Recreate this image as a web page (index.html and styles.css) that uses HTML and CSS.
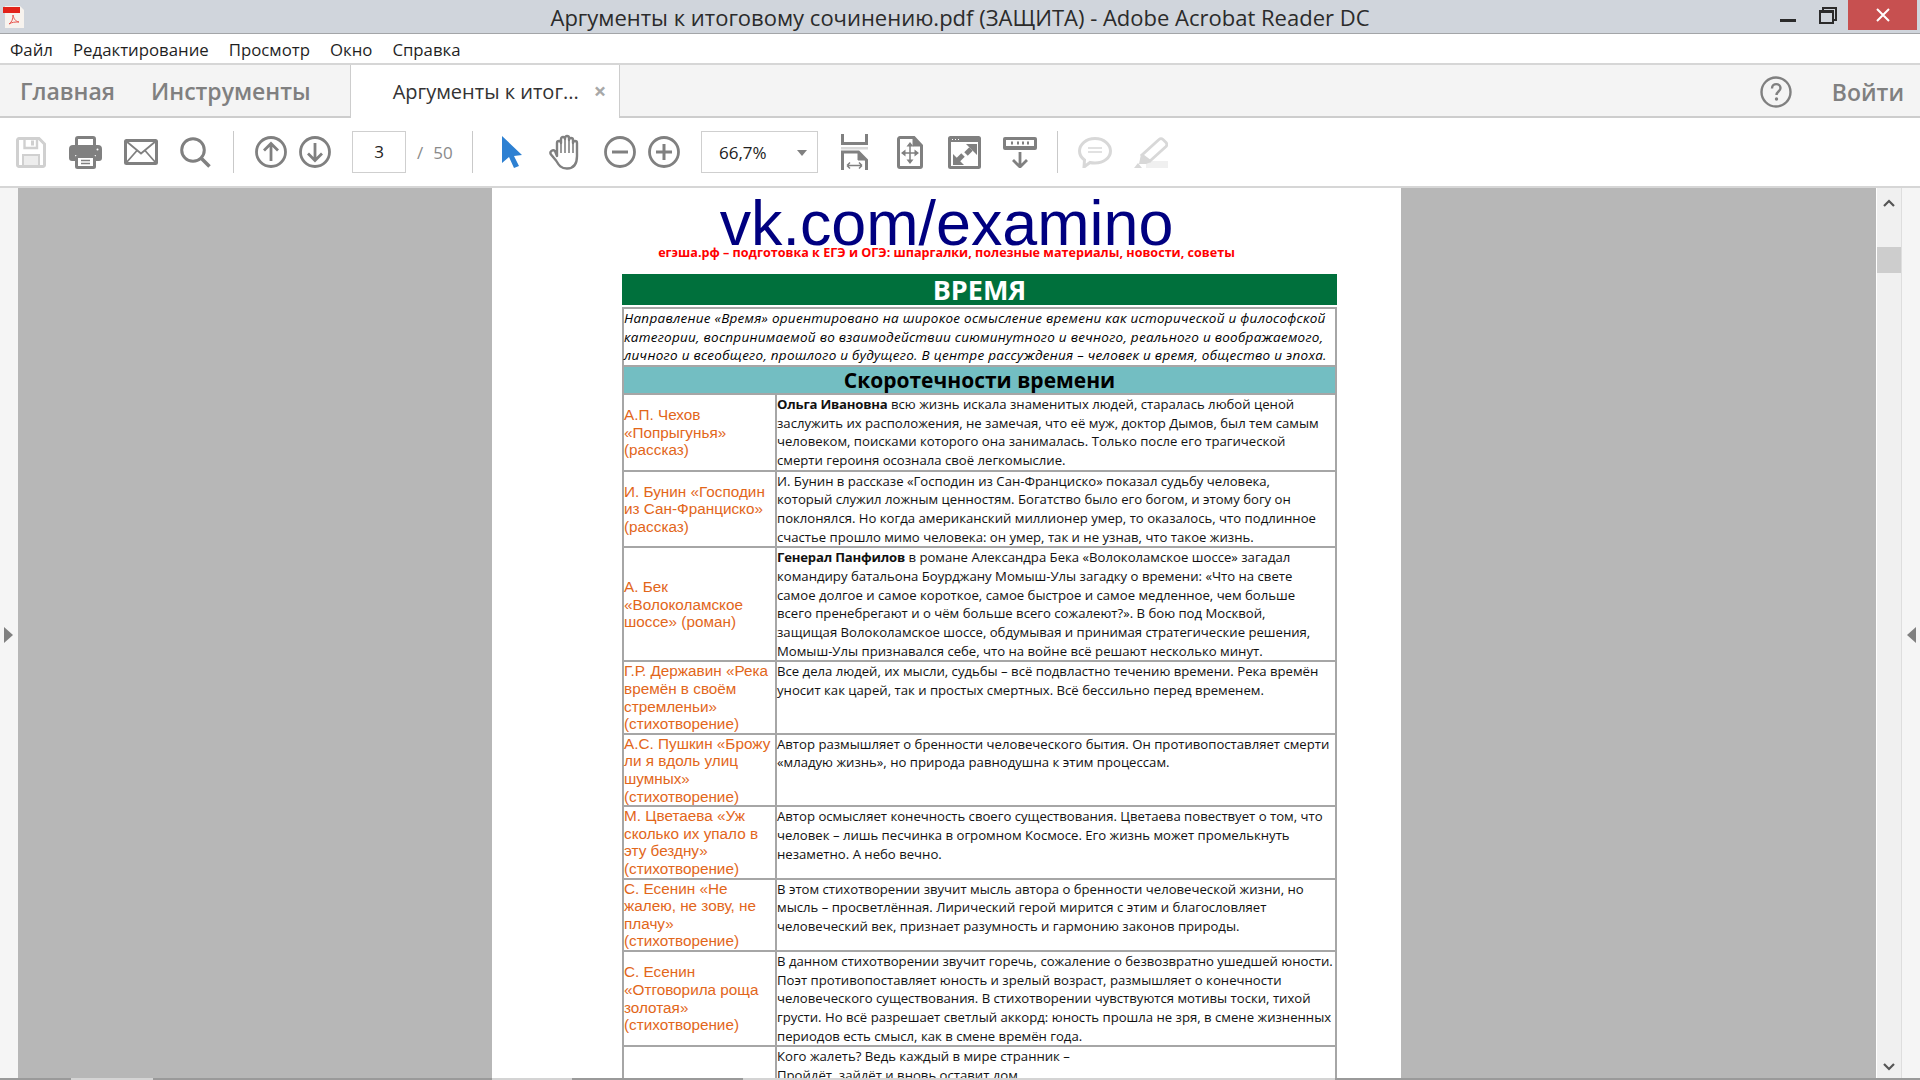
FILE: index.html
```html
<!DOCTYPE html>
<html lang="ru">

<head>
    <title>Аргументы к итоговому сочинению.pdf (ЗАЩИТА) - Adobe Acrobat Reader DC</title>
    <link rel="stylesheet" href="styles.css">
</head>

<body>
    <div class="app">
        <!-- title bar -->
        <div class="titlebar">
            <svg class="pdf-icon" viewBox="0 0 22 22">
                <path d="M2 0h15l4 4v18H2z" fill="#f7f3ee" />
                <rect x="0" y="1" width="17" height="6" fill="#e2231a" />
                <path d="M6 18c3-2 4-5 4-9 1 4 2 6 6 7-4 0-7 0-10 2z" fill="none" stroke="#e8564f" stroke-width="1" />
            </svg>
            <div class="title-text">Аргументы к итоговому сочинению.pdf (ЗАЩИТА) - Adobe Acrobat Reader DC</div>
            <div class="win-buttons">
                <div class="win-min"></div>
                <svg class="win-restore" width="18" height="17" viewBox="0 0 18 17">
                    <path d="M4 3V1h13v12h-3" fill="none" stroke="#2b2b2b" stroke-width="2" />
                    <rect x="1" y="4" width="13" height="12" fill="none" stroke="#2b2b2b" stroke-width="2" />
                    <path d="M1 5h13" stroke="#2b2b2b" stroke-width="2" />
                </svg>
                <div class="win-close">
                    <svg width="14" height="14" viewBox="0 0 14 14">
                        <path d="M1 1l12 12M13 1L1 13" stroke="#fff" stroke-width="2" />
                    </svg>
                </div>
            </div>
        </div>

        <!-- menu -->
        <div class="menubar">
            <span>Файл</span>
            <span>Редактирование</span>
            <span>Просмотр</span>
            <span>Окно</span>
            <span>Справка</span>
        </div>

        <!-- tabs -->
        <div class="tabbar">
            <div class="tab-link tab-home">Главная</div>
            <div class="tab-link tab-tools">Инструменты</div>
            <div class="doc-tab">
                <span class="doc-tab-name">Аргументы к итог...</span>
                <span class="doc-tab-close">×</span>
            </div>
            <div class="tab-right">
                <svg class="help-icon" width="32" height="32" viewBox="0 0 32 32">
                    <circle cx="16" cy="16" r="14.5" fill="none" stroke="#808080" stroke-width="2.4" />
                    <path d="M12 12.5c0-6 8.500-5.500 8.500-.5 0 3.500-4 3.500-4 7" fill="none" stroke="#808080" stroke-width="2.400" />
                    <circle cx="16.500" cy="23" r="1.700" fill="#808080" />
                </svg>
                <div class="login">Войти</div>
            </div>
        </div>

        <!-- toolbar -->
        <div class="toolbar">
            <div class="tool tool-file">
                <svg width="30" height="31" viewBox="0 0 30 31">
                    <path d="M3 1.500h20l5.500 5.500v21a1.500 1.500 0 0 1-1.500 1.500H3A1.500 1.500 0 0 1 1.500 28V3A1.500 1.500 0 0 1 3 1.500z" fill="none" stroke="#d0d0d0" stroke-width="3" />
                    <path d="M8.500 2v9h12.500V2" fill="none" stroke="#d0d0d0" stroke-width="2.400" />
                    <rect x="15" y="3.500" width="3" height="5" fill="#d0d0d0" />
                    <rect x="7" y="18" width="16" height="11" fill="#ededed" stroke="#d0d0d0" stroke-width="2" />
                </svg>
            </div>
            <div class="tool tool-file">
                <svg width="33" height="33" viewBox="0 0 33 33">
                    <path d="M7.500 11V3a1.500 1.500 0 0 1 1.500-1.500h15A1.500 1.500 0 0 1 25.500 3v8" fill="none" stroke="#808080" stroke-width="3" />
                    <path d="M4 9h25a4 4 0 0 1 4 4v9a3 3 0 0 1-3 3h-3v-6H6v6H3a3 3 0 0 1-3-3v-9a4 4 0 0 1 4-4z" fill="#808080" />
                    <rect x="7.500" y="20.500" width="18" height="11" rx="1" fill="#fff" stroke="#808080" stroke-width="3" />
                    <path d="M12 24.500h9M12 27.500h9" stroke="#808080" stroke-width="1.500" />
                    <circle cx="28.500" cy="13.500" r="1" fill="#fff" />
                </svg>
            </div>
            <div class="tool tool-file">
                <svg width="34" height="26" viewBox="0 0 34 26">
                    <rect x="1.500" y="1.500" width="31" height="23" rx="1" fill="none" stroke="#808080" stroke-width="3" />
                    <path d="M2 2l15 12.500L32 2M2 24l11-12.500M32 24L21 11.500" fill="none" stroke="#808080" stroke-width="1.800" />
                </svg>
            </div>
            <div class="tool tool-file">
                <svg width="31" height="31" viewBox="0 0 31 31">
                    <circle cx="13" cy="13" r="11.300" fill="none" stroke="#808080" stroke-width="3" />
                    <path d="M21 21l8.500 8.500" stroke="#808080" stroke-width="3.500" />
                </svg>
            </div>
            <div class="sep sep-file"></div>
            <div class="tool tool-nav tool-nav-first">
                <svg width="32" height="32" viewBox="0 0 32 32">
                    <circle cx="16" cy="16" r="14.500" fill="none" stroke="#808080" stroke-width="2.800" />
                    <path d="M16 25V8M9 14.500L16 7.500l7 7" fill="none" stroke="#808080" stroke-width="2.800" />
                </svg>
            </div>
            <div class="tool tool-nav">
                <svg width="32" height="32" viewBox="0 0 32 32">
                    <circle cx="16" cy="16" r="14.500" fill="none" stroke="#808080" stroke-width="2.800" />
                    <path d="M16 7v17M9 17.500l7 7 7-7" fill="none" stroke="#808080" stroke-width="2.800" />
                </svg>
            </div>
            <div class="page-box">3</div>
            <div class="page-total"><span class="page-slash">/</span>50</div>
            <div class="sep"></div>
            <div class="tool tool-pick">
                <svg width="21" height="32" viewBox="0 0 21 32">
                    <path d="M1 0l20 19-8 1 5 10-5 2-5-11-7 6z" fill="#2d80d2" />
                </svg>
            </div>
            <div class="tool tool-hand">
                <svg width="34" height="36" viewBox="0 0 34 36">
                    <path d="M9 22V9a2 2 0 0 1 4 0V5a2 2 0 0 1 4 0V4a2 2 0 0 1 4 0v2a2 2 0 0 1 4 0v3a2 2 0 0 1 4 0v13c0 8-3 12.500-10 12.500-6 0-8-3-11-8l-5-6c-2-3 2-5.500 4-3.500z" fill="none" stroke="#808080" stroke-width="2.400" stroke-linejoin="round" />
                    <path d="M13 8v11M17 5v14M21 5v14M25 8v11" stroke="#808080" stroke-width="1.600" />
                </svg>
            </div>
            <div class="tool tool-zoom">
                <svg width="32" height="32" viewBox="0 0 32 32">
                    <circle cx="16" cy="16" r="14.500" fill="none" stroke="#808080" stroke-width="2.800" />
                    <path d="M8 16h16" stroke="#808080" stroke-width="3" />
                </svg>
            </div>
            <div class="tool tool-zoom">
                <svg width="32" height="32" viewBox="0 0 32 32">
                    <circle cx="16" cy="16" r="14.500" fill="none" stroke="#808080" stroke-width="2.800" />
                    <path d="M8 16h16M16 8v16" stroke="#808080" stroke-width="3" />
                </svg>
            </div>
            <div class="zoom-box">
                <span>66,7%</span>
                <i class="zoom-arrow"></i>
            </div>
            <div class="tool tool-fit tool-fit-first">
                <svg width="27" height="36" viewBox="0 0 27 36">
                    <path d="M1.500 0v9.500h24V0" fill="none" stroke="#808080" stroke-width="3" />
                    <rect x="0" y="13" width="27" height="2.500" fill="#d8d8d8" />
                    <path d="M1.500 36V18h16l8 8v10" fill="none" stroke="#808080" stroke-width="3" />
                    <path d="M17 18v8h8" fill="#808080" stroke="#808080" />
                    <path d="M6 31.500h15M6 31.500l3-3M6 31.500l3 3M21 31.500l-3-3M21 31.500l-3 3" fill="none" stroke="#808080" stroke-width="1.500" />
                </svg>
            </div>
            <div class="tool tool-fit">
                <svg width="26" height="33" viewBox="0 0 26 33">
                    <path d="M3 1.500h14l7.500 8V30a1.500 1.500 0 0 1-1.500 1.500H3A1.500 1.500 0 0 1 1.500 30V3A1.500 1.500 0 0 1 3 1.500z" fill="none" stroke="#808080" stroke-width="3" />
                    <path d="M16 2v8h8" fill="#808080" stroke="#808080" />
                    <path d="M13 10v14M7 17h12" stroke="#808080" stroke-width="1.500" />
                    <path d="M13 6l3.500 4.500h-7zM13 28l3.500-4.500h-7zM4 17l4.500-3.500v7zM22 17l-4.500-3.500v7z" fill="#808080" />
                </svg>
            </div>
            <div class="tool tool-fit">
                <svg width="33" height="33" viewBox="0 0 33 33">
                    <rect x="1.500" y="1.500" width="30" height="30" rx="1" fill="none" stroke="#808080" stroke-width="3" />
                    <rect x="1" y="1" width="31" height="5" fill="#808080" />
                    <path d="M4 3.500h1M7 3.500h1M10 3.500h1" stroke="#fff" stroke-width="1" />
                    <path d="M18 8h11v11z" fill="#808080" />
                    <path d="M23 13l-5 5" stroke="#808080" stroke-width="5" />
                    <path d="M5 18v11h11z" fill="#808080" />
                    <path d="M10 24l5-5" stroke="#808080" stroke-width="5" />
                </svg>
            </div>
            <div class="tool tool-fit">
                <svg width="34" height="32" viewBox="0 0 34 32">
                    <rect x="0" y="1" width="34" height="13" rx="2" fill="#808080" />
                    <rect x="3" y="4" width="28" height="6" fill="#fff" />
                    <path d="M8 7h2M14 7h2M19 7h2M24 7h2" stroke="#808080" stroke-width="3" />
                    <path d="M17 16v14M10 24l7 7 7-7" fill="none" stroke="#808080" stroke-width="2.800" />
                </svg>
            </div>
            <div class="sep sep-fit"></div>
            <div class="tool tool-mark tool-mark-first">
                <svg width="34" height="31" viewBox="0 0 34 31">
                    <path d="M17 1.500c9 0 15.500 6 15.500 12.500S26 26 17 26c-2 0-3.500 0-5-.5L6 30l.5-7C3 20.500 1.500 17.500 1.500 14 1.500 7.500 8 1.500 17 1.500z" fill="none" stroke="#d8d8d8" stroke-width="3" />
                    <path d="M10 11h14M10 15h14" stroke="#d8d8d8" stroke-width="1.600" />
                </svg>
            </div>
            <div class="tool tool-mark">
                <svg width="34" height="31" viewBox="0 0 34 31">
                    <rect x="12" y="24" width="22" height="7" fill="#f0f0f0" />
                    <path d="M25 2.500a3 3 0 0 1 4 0l3 3a3 3 0 0 1 0 4L16 24l-8-6z" fill="#fff" stroke="#d8d8d8" stroke-width="2.800" />
                    <path d="M7 17l10 8-5 2H5z" fill="#d8d8d8" />
                    <path d="M0 31l4-5 4 5z" fill="#d8d8d8" />
                </svg>
            </div>
        </div>

        <!-- document -->
        <div class="workspace">
            <div class="side-panel">
                <i class="arrow-right"></i>
            </div>
            <div class="canvas">
                <div class="page">
                    <div class="logo">vk.com/examino</div>
                    <div class="slogan">егэша.рф – подготовка к ЕГЭ и ОГЭ: шпаргалки, полезные материалы, новости, советы</div>
                    <div class="topic">ВРЕМЯ</div>
                    <table class="args">
                        <colgroup>
                            <col class="col-work">
                            <col>
                        </colgroup>
                        <tr>
                            <td colspan="2" class="intro">Направление «Время» ориентировано на широкое осмысление времени как исторической и философской<br>категории, воспринимаемой во взаимодействии сиюминутного и вечного, реального и воображаемого,<br>личного и всеобщего, прошлого и будущего. В центре рассуждения – человек и время, общество и эпоха.</td>
                        </tr>
                        <tr>
                            <td colspan="2" class="subtopic">Скоротечности времени</td>
                        </tr>
                        <tr>
                            <td class="work">А.П. Чехов<br>«Попрыгунья»<br>(рассказ)</td>
                            <td class="text"><b>Ольга Ивановна</b> всю жизнь искала знаменитых людей, старалась любой ценой<br>заслужить их расположения, не замечая, что её муж, доктор Дымов, был тем самым<br>человеком, поисками которого она занималась. Только после его трагической<br>смерти героиня осознала своё легкомыслие.</td>
                        </tr>
                        <tr>
                            <td class="work">И. Бунин «Господин<br>из Сан-Франциско»<br>(рассказ)</td>
                            <td class="text">И. Бунин в рассказе «Господин из Сан-Франциско» показал судьбу человека,<br>который служил ложным ценностям. Богатство было его богом, и этому богу он<br>поклонялся. Но когда американский миллионер умер, то оказалось, что подлинное<br>счастье прошло мимо человека: он умер, так и не узнав, что такое жизнь.</td>
                        </tr>
                        <tr>
                            <td class="work">А. Бек<br>«Волоколамское<br>шоссе» (роман)</td>
                            <td class="text"><b>Генерал Панфилов</b> в романе Александра Бека «Волоколамское шоссе» загадал<br>командиру батальона Боурджану Момыш-Улы загадку о времени: «Что на свете<br>самое долгое и самое короткое, самое быстрое и самое медленное, чем больше<br>всего пренебрегают и о чём больше всего сожалеют?». В бою под Москвой,<br>защищая Волоколамское шоссе, обдумывая и принимая стратегические решения,<br>Момыш-Улы признавался себе, что на войне всё решают несколько минут.</td>
                        </tr>
                        <tr>
                            <td class="work">Г.Р. Державин «Река<br>времён в своём<br>стремленьи»<br>(стихотворение)</td>
                            <td class="text">Все дела людей, их мысли, судьбы – всё подвластно течению времени. Река времён<br>уносит как царей, так и простых смертных. Всё бессильно перед временем.</td>
                        </tr>
                        <tr>
                            <td class="work">А.С. Пушкин «Брожу<br>ли я вдоль улиц<br>шумных»<br>(стихотворение)</td>
                            <td class="text">Автор размышляет о бренности человеческого бытия. Он противопоставляет смерти<br>«младую жизнь», но природа равнодушна к этим процессам.</td>
                        </tr>
                        <tr>
                            <td class="work">М. Цветаева «Уж<br>сколько их упало в<br>эту бездну»<br>(стихотворение)</td>
                            <td class="text">Автор осмысляет конечность своего существования. Цветаева повествует о том, что<br>человек – лишь песчинка в огромном Космосе. Его жизнь может промелькнуть<br>незаметно. А небо вечно.</td>
                        </tr>
                        <tr>
                            <td class="work">С. Есенин «Не<br>жалею, не зову, не<br>плачу»<br>(стихотворение)</td>
                            <td class="text">В этом стихотворении звучит мысль автора о бренности человеческой жизни, но<br>мысль – просветлённая. Лирический герой мирится с этим и благословляет<br>человеческий век, признает разумность и гармонию законов природы.</td>
                        </tr>
                        <tr>
                            <td class="work">С. Есенин<br>«Отговорила роща<br>золотая»<br>(стихотворение)</td>
                            <td class="text">В данном стихотворении звучит горечь, сожаление о безвозвратно ушедшей юности.<br>Поэт противопоставляет юность и зрелый возраст, размышляет о конечности<br>человеческого существования. В стихотворении чувствуются мотивы тоски, тихой<br>грусти. Но всё разрешает светлый аккорд: юность прошла не зря, в смене жизненных<br>периодов есть смысл, как в смене времён года.</td>
                        </tr>
                        <tr>
                            <td class="work"></td>
                            <td class="text">Кого жалеть? Ведь каждый в мире странник –<br>Пройдёт, зайдёт и вновь оставит дом.</td>
                        </tr>
                    </table>
                </div>
            </div>
            <div class="vscroll">
                <svg class="chevron" width="12" height="8" viewBox="0 0 12 8">
                    <path d="M1 7l5-5 5 5" fill="none" stroke="#555" stroke-width="2.200" />
                </svg>
                <div class="thumb"></div>
                <svg class="chevron chevron-down" width="12" height="8" viewBox="0 0 12 8">
                    <path d="M1 1l5 5 5-5" fill="none" stroke="#555" stroke-width="2.200" />
                </svg>
            </div>
            <div class="side-panel">
                <i class="arrow-left"></i>
            </div>
        </div>

        <!-- bottom edge -->
        <div class="bottom-strip">
            <i class="strip-a"></i>
            <i class="strip-b"></i>
            <i class="strip-c"></i>
        </div>
    </div>
</body>

</html>
```

FILE: styles.css
```css
* {
    box-sizing: border-box;
}

html,
body {
    margin: 0;
    height: 100%;
    overflow: hidden;
}

.app {
    height: 1080px;
    display: flex;
    flex-direction: column;
    font-family: "Open Sans", sans-serif;
    background: #fff;
}

/* title bar */
.titlebar {
    height: 34px;
    flex: none;
    position: relative;
    display: flex;
    justify-content: center;
    background: #d0d5dc;
    border-bottom: 1px solid #a3a5a8;
}

.pdf-icon {
    position: absolute;
    left: 3px;
    top: 6px;
    width: 22px;
    height: 22px;
}

.title-text {
    font-size: 22px;
    line-height: 35px;
    color: #2b2b2b;
}

.win-buttons {
    position: absolute;
    right: 3px;
    top: 0;
    display: flex;
    align-items: flex-start;
}

.win-min {
    width: 16px;
    height: 3px;
    margin-top: 19px;
    margin-right: 23px;
    background: #2b2b2b;
}

.win-restore {
    margin-top: 7px;
    margin-right: 11px;
}

.win-close {
    width: 69px;
    height: 30px;
    display: flex;
    align-items: center;
    justify-content: center;
    background: #c75050;
}

/* menu */
.menubar {
    height: 31px;
    flex: none;
    display: flex;
    gap: 20px;
    padding-left: 10px;
    font-size: 16.8px;
    line-height: 32px;
    color: #1f1f1f;
    border-bottom: 2px solid #d6d6d6;
}

/* tabs */
.tabbar {
    height: 53px;
    flex: none;
    display: flex;
    background: #f4f4f4;
    border-bottom: 2px solid #cdcdcd;
}

.tab-link {
    font-size: 23px;
    font-weight: 600;
    line-height: 52px;
    color: #808080;
}

.tab-home {
    margin-left: 20px;
}

.tab-tools {
    margin-left: 36px;
}

.doc-tab {
    width: 270px;
    height: 53px;
    margin-left: 39px;
    padding-left: 42px;
    display: flex;
    background: #fff;
    border-left: 1px solid #cdcdcd;
    border-right: 1px solid #cdcdcd;
}

.doc-tab-name {
    font-size: 20px;
    line-height: 54px;
    color: #333;
}

.doc-tab-close {
    margin-left: 15px;
    font-size: 22px;
    font-weight: 700;
    line-height: 50px;
    color: #a8a8a8;
}

.tab-right {
    margin-left: auto;
    display: flex;
    align-items: center;
    padding: 2px 16px 0 0;
}

.help-icon {
    margin-right: 40px;
}

.login {
    font-size: 23px;
    font-weight: 600;
    color: #808080;
}

/* toolbar */
.toolbar {
    height: 70px;
    flex: none;
    display: flex;
    align-items: center;
    padding-left: 3px;
    border-bottom: 2px solid #d6d6d6;
}

.tool {
    display: flex;
    align-items: center;
    justify-content: center;
}

.tool-file {
    width: 55px;
}

.tool-nav {
    width: 44px;
}

.tool-nav-first {
    margin-left: 15px;
}

.tool-pick {
    width: 40px;
    margin-left: 18px;
}

.tool-hand {
    width: 67px;
}

.tool-zoom {
    width: 44px;
}

.tool-fit {
    width: 55px;
}

.tool-fit-first {
    margin-left: 9px;
}

.tool-mark {
    width: 56px;
}

.tool-mark-first {
    margin-left: 9px;
}

.sep {
    width: 1px;
    height: 42px;
    background: #c9c9c9;
}

.sep-file {
    margin-left: 10px;
}

.sep-fit {
    margin-left: 10px;
}

.page-box {
    width: 54px;
    height: 42px;
    margin-left: 15px;
    font-size: 17px;
    line-height: 40px;
    text-align: center;
    color: #222;
    border: 1px solid #cfcfcf;
}

.page-total {
    width: 66px;
    padding-left: 11px;
    font-size: 17px;
    color: #8a8a8a;
}

.page-slash {
    margin-right: 10px;
}

.zoom-box {
    width: 117px;
    height: 42px;
    margin-left: 15px;
    padding-left: 17px;
    display: flex;
    align-items: center;
    position: relative;
    font-size: 17px;
    color: #222;
    border: 1px solid #cfcfcf;
}

.zoom-arrow {
    position: absolute;
    left: 95px;
    top: 18px;
    border-top: 6px solid #808080;
    border-left: 5px solid transparent;
    border-right: 5px solid transparent;
}

/* document area */
.workspace {
    flex: 1;
    min-height: 0;
    display: flex;
    overflow: hidden;
}

.side-panel {
    width: 18px;
    flex: none;
    background: #f5f5f5;
    position: relative;
}

.arrow-right {
    position: absolute;
    left: 4px;
    top: 439px;
    border-left: 9px solid #808080;
    border-top: 8px solid transparent;
    border-bottom: 8px solid transparent;
}

.arrow-left {
    position: absolute;
    left: 5px;
    top: 439px;
    border-right: 9px solid #808080;
    border-top: 8px solid transparent;
    border-bottom: 8px solid transparent;
}

.canvas {
    flex: 1;
    min-width: 0;
    display: flex;
    justify-content: center;
    padding-right: 1px;
    background: #b7b7b7;
    overflow: hidden;
}

.page {
    width: 909px;
    height: 1000px;
    flex: none;
    padding-top: 12px;
    background: #fff;
}

.logo {
    height: 45px;
    font-family: "Liberation Sans", Arial, sans-serif;
    font-size: 62.8px;
    line-height: 46px;
    text-align: center;
    color: #000080;
}

.slogan {
    font-size: 12.6px;
    font-weight: 700;
    line-height: 16px;
    text-align: center;
    color: #ff0000;
    white-space: nowrap;
}

.topic {
    width: 715px;
    height: 31px;
    margin-top: 13px;
    margin-left: 130px;
    background: #00703c;
    color: #fff;
    font-size: 27px;
    font-weight: 700;
    line-height: 31px;
    text-align: center;
}

.args {
    width: 715px;
    table-layout: fixed;
    margin-top: 2px;
    margin-left: 130px;
    border-collapse: collapse;
    white-space: nowrap;
}

.col-work {
    width: 153px;
}

.args td {
    padding: 0;
    border: 2px solid #a6a6a6;
}

.intro {
    height: 58px;
    font-size: 13.5px;
    font-style: italic;
    letter-spacing: 0.27px;
    line-height: 18.5px;
    color: #000;
}

.subtopic {
    height: 28px;
    background: #73bec2;
    font-size: 21px;
    font-weight: 700;
    line-height: 22px;
    text-align: center;
    color: #000;
}

.args .work {
    font-family: "Liberation Sans", Arial, sans-serif;
    font-size: 15.3px;
    line-height: 17.6px;
    color: #e2661a;
    vertical-align: middle;
}

.args .text {
    font-size: 13.15px;
    line-height: 18.67px;
    color: #111;
    vertical-align: top;
}

.args .text b {
    letter-spacing: -0.2px;
}

/* scrollbar */
.vscroll {
    width: 26px;
    flex: none;
    display: flex;
    flex-direction: column;
    align-items: center;
    padding-top: 11px;
    background: #f0f0f0;
    border-left: 1px solid #fff;
    border-right: 1px solid #dedede;
}

.thumb {
    width: 24px;
    height: 26px;
    margin-top: 40px;
    background: #cdcdcd;
}

.chevron-down {
    margin-top: auto;
    margin-bottom: 7px;
}

/* bottom edge */
.bottom-strip {
    height: 2px;
    flex: none;
    display: flex;
    background: #9a9a9a;
}

.bottom-strip i {
    display: block;
    height: 2px;
    background: #d4d4d4;
}

.strip-a {
    width: 82px;
    margin-left: 71px;
}

.strip-b {
    width: 80px;
    margin-left: 339px;
}

.strip-c {
    width: 592px;
    margin-left: 171px;
}
```
